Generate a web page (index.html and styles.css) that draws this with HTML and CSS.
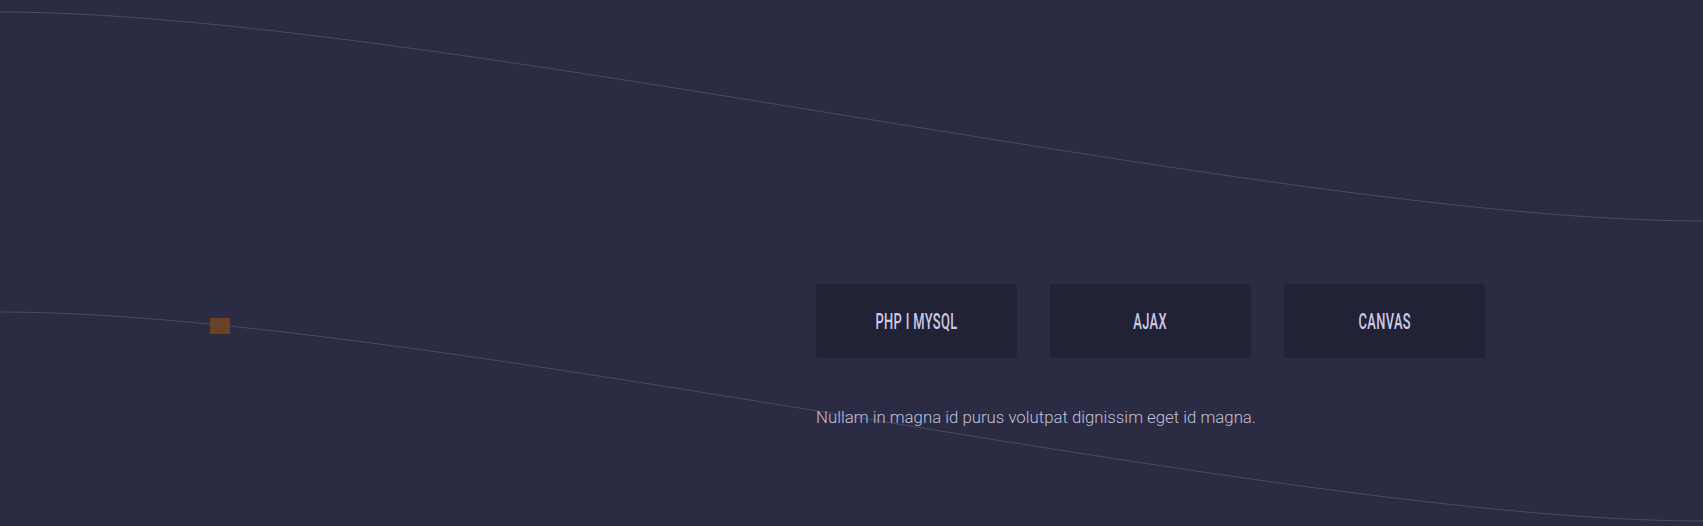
FILE: index.html
```html
<!DOCTYPE html>
<html lang="en">
<head>
<meta charset="utf-8">
<title>Skills</title>
<link rel="stylesheet" href="styles.css">
</head>
<body>
<section class="hero">
  <span class="marker"></span>
  <svg class="waves" width="1703" height="526" viewBox="0 0 1703 526" aria-hidden="true">
    <path d="M0,12 C420,12 1283,221 1703,221" />
    <path d="M0,312 C420,312 1283,521 1703,521" />
  </svg>
  <div class="content">
    <div class="tags">
      <div class="tag"><span class="tag-label">PHP I MYSQL</span></div>
      <div class="tag"><span class="tag-label">AJAX</span></div>
      <div class="tag"><span class="tag-label">CANVAS</span></div>
    </div>
    <p class="lead">Nullam in magna id purus volutpat dignissim eget id magna.</p>
  </div>
</section>
</body>
</html>
```
FILE: styles.css
```css
* { box-sizing: border-box; }
html, body {
  margin: 0;
  padding: 0;
  background: #2b2b44;
  overflow: hidden;
}
.hero {
  position: relative;
  width: 1703px;
  height: 526px;
  background: #2b2b44;
  font-family: Roboto, "Liberation Sans", sans-serif;
}
.marker {
  position: absolute;
  left: 210px;
  top: 318px;
  width: 20px;
  height: 16px;
  background: #6b4221;
  z-index: 0;
}
.waves {
  position: absolute;
  left: 0;
  top: 0;
  z-index: 1;
  pointer-events: none;
}
.waves path {
  fill: none;
  stroke: #4a4a66;
  stroke-width: 1;
}
.content {
  position: relative;
  z-index: 2;
  padding: 284px 0 0 816px;
}
.tags {
  display: flex;
  gap: 33px;
}
.tag {
  width: 201px;
  height: 74px;
  background: #222236;
  border-radius: 3px;
  display: flex;
  align-items: center;
  justify-content: center;
}
.tag-label {
  display: inline-block;
  font-size: 21.5px;
  font-weight: 500;
  color: #cacae8;
  letter-spacing: 0.6px;
  transform: scaleX(0.6);
  white-space: nowrap;
}
.lead {
  margin: 46px 0 0;
  font-size: 16.8px;
  font-weight: 300;
  line-height: 27px;
  color: #c0c0da;
}
```
